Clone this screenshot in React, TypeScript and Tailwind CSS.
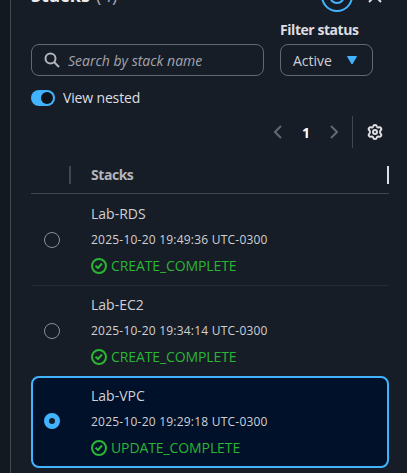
import React from "react";

type Stack = { name: string; date: string; status: string; selected?: boolean };

const stacks: Stack[] = [
  { name: "Lab-RDS", date: "2025-10-20 19:49:36 UTC-0300", status: "CREATE_COMPLETE" },
  { name: "Lab-EC2", date: "2025-10-20 19:34:14 UTC-0300", status: "CREATE_COMPLETE" },
  { name: "Lab-VPC", date: "2025-10-20 19:29:18 UTC-0300", status: "UPDATE_COMPLETE", selected: true },
];

function Radio({ checked }: { checked?: boolean }) {
  return checked ? (
    <span className="block size-4 rounded-full border-[5px] border-[#42b4ff] bg-[#161d26]" />
  ) : (
    <span className="block size-4 rounded-full border border-[#8c8c94]" />
  );
}

function CheckIcon() {
  return (
    <svg className="size-4 shrink-0" viewBox="0 0 16 16" fill="none" stroke="#2bb534" strokeWidth="2">
      <circle cx="8" cy="8" r="7" />
      <path d="m4.500 7.700 2.500 2.300 4-4.500" />
    </svg>
  );
}

function GearIcon() {
  return (
    <svg className="size-4" viewBox="0 0 16 16" fill="none" stroke="#dedee3" strokeWidth="2" strokeLinejoin="round">
      <path d="M6.200 2.400C6.500.6 9.500.6 9.800 2.400c.2.900 1.100 1.300 1.900.9 1.900-.7 3.400 1.700 2 3-.8.8-.8 2.600 0 3.400 1.400 1.300-.1 3.700-2 3-.8-.4-1.700 0-1.900.9-.3 1.800-3.300 1.800-3.600 0-.2-.9-1.100-1.300-1.900-.9-1.900.7-3.400-1.700-2-3 .8-.8.8-2.600 0-3.400-1.400-1.300.1-3.700 2-3 .8.4 1.700 0 1.900-.9Z" />
      <circle cx="8" cy="8" r="2" />
    </svg>
  );
}

function StackRow({ stack, divided }: { stack: Stack; divided: boolean }) {
  const frame = stack.selected
    ? "h-[92px] rounded-lg border-2 border-[#42b4ff] bg-[#001129] pl-[11px] pt-[7px]"
    : divided
      ? "h-[92px] border-b border-[#232b37] pl-[13px] pt-[9px]"
      : "h-[90px] pl-[13px] pt-[8px]";
  return (
    <div className={"flex w-[358px] " + frame}>
      <div className={"flex w-[47px] " + (stack.selected ? "pt-[28px]" : "pt-[29px]")}>
        <Radio checked={stack.selected} />
      </div>
      <div className="flex flex-col whitespace-nowrap text-[#d0d0d6]">
        <span className="h-[26px] text-[14px] leading-[22px]">{stack.name}</span>
        <span className="h-[26px] text-[12px] leading-[22px] tracking-[0.22px]">{stack.date}</span>
        <div className="flex h-[22px] items-center gap-1 text-[14px] leading-[22px] text-[#2bb534]">
          <CheckIcon />
          <span className="tracking-[-0.1px]">{stack.status}</span>
        </div>
      </div>
    </div>
  );
}

export default function App() {
  return (
    <div className="flex h-[473px] w-[407px] overflow-hidden bg-[#131920] font-['Open_Sans',sans-serif]">
      <div className="w-[10px] shrink-0" />
      <main className="flex flex-1 flex-col border-l border-[#424650] bg-[#161d26] pl-5">
        <header className="-mt-[20px] flex h-[40px] w-[358px] justify-between">
          <h1 className="pt-[4px] text-[18px] font-bold leading-[22px] tracking-[0.2px] text-[#ebebf0]">
            Stacks <span className="ml-px font-normal text-[#a4a4ad]">(4)</span>
          </h1>
          <div className="flex h-8 items-center gap-[14px] pr-[6px]">
            <svg className="size-8" viewBox="0 0 32 32" fill="none" stroke="#42b4ff" strokeWidth="2">
              <circle cx="16" cy="16" r="15" />
              <circle cx="16" cy="16" r="7" />
            </svg>
            <svg className="size-4" viewBox="0 0 16 16" fill="none" stroke="#dedee3" strokeWidth="2">
              <path d="m2 2 12 12M14 2 2 14" />
            </svg>
          </div>
        </header>

        <div className="flex items-end gap-4">
          <div className="flex h-8 w-[233px] items-center gap-2 rounded-lg border border-[#656871] pl-3">
            <svg className="size-4" viewBox="0 0 16 16" fill="none" stroke="#b4b4bb" strokeWidth="2">
              <circle cx="6.500" cy="6.500" r="5" />
              <path d="m10 10 5 5" />
            </svg>
            <span className="whitespace-nowrap text-[14px] italic text-[#a4a4ad]">Search by stack name</span>
          </div>
          <div className="flex flex-col">
            <span className="h-[24px] whitespace-nowrap text-[14px] font-bold leading-[20px] tracking-[-0.45px] text-[#dedee3]">Filter status</span>
            <div className="flex h-8 w-[93px] items-center justify-between rounded-lg border border-[#656871] pl-3 pr-[15px] text-[14px] text-[#d0d0d6]">
              <span>Active</span>
              <svg className="h-[9px] w-[10px]" viewBox="0 0 10 9" fill="#42b4ff" stroke="#42b4ff" strokeLinejoin="round">
                <path d="M.5.5h9L5 8Z" />
              </svg>
            </div>
          </div>
        </div>

        <div className="mt-[11px] flex h-[22px] items-center gap-2">
          <span className="flex h-4 w-6 items-center justify-end rounded-full bg-[#42b4ff] pr-[2px]">
            <span className="size-3 rounded-full bg-[#0f141a]" />
          </span>
          <span className="whitespace-nowrap text-[14px] leading-[22px] tracking-[-0.15px] text-[#dedee3]">View nested</span>
        </div>

        <div className="mt-[7px] flex h-8 w-[358px] items-center justify-end pr-[6px]">
          <svg className="h-[14px] w-2" viewBox="0 0 8 14" fill="none" stroke="#656871" strokeWidth="2">
            <path d="M7 1 1 7l6 6" />
          </svg>
          <span className="w-12 text-center text-[14px] font-bold text-white">1</span>
          <svg className="h-[14px] w-2" viewBox="0 0 8 14" fill="none" stroke="#656871" strokeWidth="2">
            <path d="m1 1 6 6-6 6" />
          </svg>
          <span className="ml-[14px] mr-[14px] h-8 w-px bg-[#424650]" />
          <GearIcon />
        </div>

        <div className="mt-[9px] flex h-[37px] w-[358px] items-center border-b border-[#424650]">
          <span className="ml-[38px] h-[18px] w-[2px] bg-[#424650]" />
          <span className="ml-5 text-[14px] font-bold leading-[18px] tracking-[-0.45px] text-[#b4b4bb]">Stacks</span>
          <span className="ml-auto h-[18px] w-[2px] bg-[#dedee3]" />
        </div>

        {stacks.map((stack, index) => (
          <StackRow key={stack.name} stack={stack} divided={index === 0} />
        ))}
      </main>
    </div>
  );
}
